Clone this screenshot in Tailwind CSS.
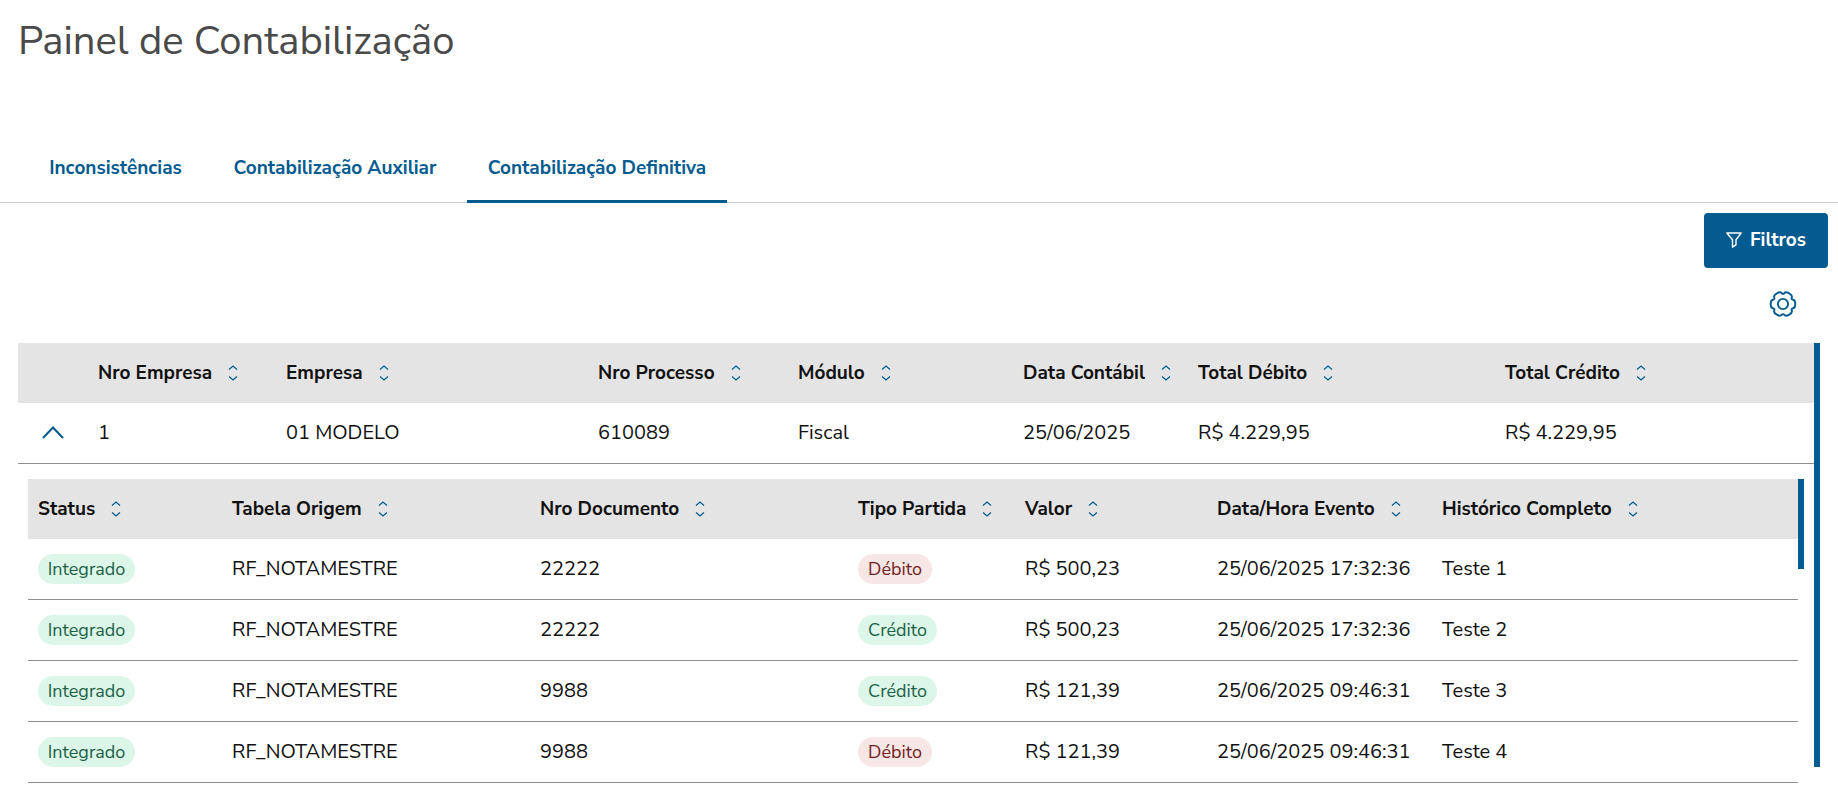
<!DOCTYPE html>
<html lang="pt-BR">
<head>
    <meta charset="UTF-8">
    <meta name="viewport" content="width=device-width, initial-scale=1.0">
    <title>Painel de Contabilização</title>
    <script src="https://cdn.jsdelivr.net/npm/@tailwindcss/browser@4"></script>
</head>
<body class="font-['Nunito_Sans','Nunito','Lato',sans-serif] bg-white text-[#111] text-[20px] leading-7">
    <!-- Shared icons -->
    <svg class="hidden">
        <symbol id="sort" viewBox="0 0 10 16">
            <path d="M1 4.500 5 1l4 3.500M1 11.500 5 15l4-3.500" fill="none" stroke="currentColor" stroke-width="1.200"/>
        </symbol>
    </svg>

    <!-- Title -->
    <header class="px-[18px] pt-2 h-[123px]">
        <h1 class="text-[40px] leading-[66px] font-normal text-[#4a4a4a]">Painel de Contabilização</h1>
    </header>

    <!-- Tabs -->
    <nav class="flex gap-[10px] pl-7 h-20 border-b border-[#ccc] text-[#045b8f] text-[19px] leading-7 font-bold text-center">
        <a href="#" class="w-[175px] pt-[31px]">Inconsistências</a>
        <a href="#" class="w-[244px] pt-[31px]">Contabilização Auxiliar</a>
        <a href="#" class="w-[260px] pt-[31px] -mb-px border-b-3 border-[#045b8f]">Contabilização Definitiva</a>
    </nav>

    <main>
        <!-- Actions -->
        <div class="flex flex-col items-end px-[10px] pt-[10px]">
            <button type="button" class="flex items-center justify-center gap-2 w-[124px] h-[55px] pb-[2px] rounded bg-[#045b8f] text-white text-[19px] leading-7 font-bold">
                <svg class="w-4 h-4" viewBox="0 0 16 16" fill="none" stroke="currentColor" stroke-width="1.400" stroke-linejoin="round">
                    <path d="M.8 1h14.400L10 7.800v5L6.500 15.200V7.800z"/>
                </svg>
                Filtros
            </button>
            <button type="button" aria-label="Configurações" class="mt-[23px] mr-[31px] text-[#045b8f]">
                <svg class="w-[28px] h-[26px] block" viewBox="-14.500 -13.500 29 27" fill="none" stroke="currentColor" stroke-width="2">
                    <path d="M12.740 0Q12.740 4.140 10.530 4.470T9.140 6.890 6.380 11.040 1.400 11.360-1.400 11.360-6.380 11.040-9.140 6.890-10.530 4.470-12.740 0-10.530-4.470-9.140-6.890-6.380-11.040-1.400-11.360 1.400-11.360 6.380-11.040 9.140-6.890 10.530-4.470 12.740 0z"/>
                    <circle r="5.300"/>
                </svg>
            </button>
        </div>

        <!-- Outer grid -->
        <div class="flex items-start ml-[18px] mr-[18px] mt-[26px]">
            <div class="flex-1 min-w-0">
                <table class="w-full table-fixed text-left">
                    <colgroup>
                        <col class="w-[70px]"><col class="w-[188px]"><col class="w-[312px]"><col class="w-[200px]"><col class="w-[225px]"><col class="w-[175px]"><col class="w-[307px]"><col>
                    </colgroup>
                    <thead class="bg-[#e4e4e4] text-[19px] leading-7">
                        <tr class="h-[60px]">
                            <td></td>
                            <th class="px-[10px] font-bold">Nro Empresa<svg class="inline w-[10px] h-4 ml-4 mb-[2px] text-[#045b8f]"><use href="#sort"/></svg></th>
                            <th class="px-[10px] font-bold">Empresa<svg class="inline w-[10px] h-4 ml-4 mb-[2px] text-[#045b8f]"><use href="#sort"/></svg></th>
                            <th class="px-[10px] font-bold">Nro Processo<svg class="inline w-[10px] h-4 ml-4 mb-[2px] text-[#045b8f]"><use href="#sort"/></svg></th>
                            <th class="px-[10px] font-bold">Módulo<svg class="inline w-[10px] h-4 ml-4 mb-[2px] text-[#045b8f]"><use href="#sort"/></svg></th>
                            <th class="px-[10px] font-bold">Data Contábil<svg class="inline w-[10px] h-4 ml-4 mb-[2px] text-[#045b8f]"><use href="#sort"/></svg></th>
                            <th class="px-[10px] font-bold">Total Débito<svg class="inline w-[10px] h-4 ml-4 mb-[2px] text-[#045b8f]"><use href="#sort"/></svg></th>
                            <th class="px-[10px] font-bold">Total Crédito<svg class="inline w-[10px] h-4 ml-4 mb-[2px] text-[#045b8f]"><use href="#sort"/></svg></th>
                        </tr>
                    </thead>
                    <tbody>
                        <tr class="h-[60px] border-b border-[#8f8f8f]">
                            <td class="pl-6">
                                <button type="button" aria-label="Recolher" class="block text-[#045b8f]">
                                    <svg class="w-[22px] h-[14px]" viewBox="0 0 22 14" fill="none" stroke="currentColor" stroke-width="2"><path d="M1 12 11 1.500 21 12"/></svg>
                                </button>
                            </td>
                            <td class="px-[10px]">1</td>
                            <td class="px-[10px]">01 MODELO</td>
                            <td class="px-[10px]">610089</td>
                            <td class="px-[10px]">Fiscal</td>
                            <td class="px-[10px]">25/06/2025</td>
                            <td class="px-[10px]">R$ 4.229,95</td>
                            <td class="px-[10px]">R$ 4.229,95</td>
                        </tr>
                    </tbody>
                </table>

                <!-- Detail grid -->
                <div class="flex items-start pl-[10px] pr-[10px] pt-[15px]">
                    <table class="flex-1 w-full table-fixed text-left">
                        <colgroup>
                            <col class="w-[194px]"><col class="w-[308px]"><col class="w-[318px]"><col class="w-[167px]"><col class="w-[192px]"><col class="w-[225px]"><col>
                        </colgroup>
                        <thead class="bg-[#e4e4e4] text-[19px] leading-7">
                            <tr class="h-[60px]">
                                <th class="px-[10px] font-bold">Status<svg class="inline w-[10px] h-4 ml-4 mb-[2px] text-[#045b8f]"><use href="#sort"/></svg></th>
                                <th class="px-[10px] font-bold">Tabela Origem<svg class="inline w-[10px] h-4 ml-4 mb-[2px] text-[#045b8f]"><use href="#sort"/></svg></th>
                                <th class="px-[10px] font-bold">Nro Documento<svg class="inline w-[10px] h-4 ml-4 mb-[2px] text-[#045b8f]"><use href="#sort"/></svg></th>
                                <th class="px-[10px] font-bold">Tipo Partida<svg class="inline w-[10px] h-4 ml-4 mb-[2px] text-[#045b8f]"><use href="#sort"/></svg></th>
                                <th class="px-[10px] font-bold">Valor<svg class="inline w-[10px] h-4 ml-4 mb-[2px] text-[#045b8f]"><use href="#sort"/></svg></th>
                                <th class="px-[10px] font-bold">Data/Hora Evento<svg class="inline w-[10px] h-4 ml-4 mb-[2px] text-[#045b8f]"><use href="#sort"/></svg></th>
                                <th class="px-[10px] font-bold">Histórico Completo<svg class="inline w-[10px] h-4 ml-4 mb-[2px] text-[#045b8f]"><use href="#sort"/></svg></th>
                            </tr>
                        </thead>
                        <tbody>
                            <tr class="h-[61px] border-b border-[#8f8f8f]">
                                <td class="px-[10px]"><span class="block w-[97px] h-[30px] rounded-full bg-[#dcf6ea] text-[#1c6145] text-[18px] leading-[30px] text-center">Integrado</span></td>
                                <td class="px-[10px]">RF_NOTAMESTRE</td>
                                <td class="px-[10px]">22222</td>
                                <td class="px-[10px]"><span class="block w-[74px] h-[30px] rounded-full bg-[#f6e6e5] text-[#72211d] text-[18px] leading-[30px] text-center">Débito</span></td>
                                <td class="px-[10px]">R$ 500,23</td>
                                <td class="px-[10px]">25/06/2025 17:32:36</td>
                                <td class="px-[10px]">Teste 1</td>
                            </tr>
                            <tr class="h-[61px] border-b border-[#8f8f8f]">
                                <td class="px-[10px]"><span class="block w-[97px] h-[30px] rounded-full bg-[#dcf6ea] text-[#1c6145] text-[18px] leading-[30px] text-center">Integrado</span></td>
                                <td class="px-[10px]">RF_NOTAMESTRE</td>
                                <td class="px-[10px]">22222</td>
                                <td class="px-[10px]"><span class="block w-[79px] h-[30px] rounded-full bg-[#dcf6ea] text-[#1c6145] text-[18px] leading-[30px] text-center">Crédito</span></td>
                                <td class="px-[10px]">R$ 500,23</td>
                                <td class="px-[10px]">25/06/2025 17:32:36</td>
                                <td class="px-[10px]">Teste 2</td>
                            </tr>
                            <tr class="h-[61px] border-b border-[#8f8f8f]">
                                <td class="px-[10px]"><span class="block w-[97px] h-[30px] rounded-full bg-[#dcf6ea] text-[#1c6145] text-[18px] leading-[30px] text-center">Integrado</span></td>
                                <td class="px-[10px]">RF_NOTAMESTRE</td>
                                <td class="px-[10px]">9988</td>
                                <td class="px-[10px]"><span class="block w-[79px] h-[30px] rounded-full bg-[#dcf6ea] text-[#1c6145] text-[18px] leading-[30px] text-center">Crédito</span></td>
                                <td class="px-[10px]">R$ 121,39</td>
                                <td class="px-[10px]">25/06/2025 09:46:31</td>
                                <td class="px-[10px]">Teste 3</td>
                            </tr>
                            <tr class="h-[61px] border-b border-[#8f8f8f]">
                                <td class="px-[10px]"><span class="block w-[97px] h-[30px] rounded-full bg-[#dcf6ea] text-[#1c6145] text-[18px] leading-[30px] text-center">Integrado</span></td>
                                <td class="px-[10px]">RF_NOTAMESTRE</td>
                                <td class="px-[10px]">9988</td>
                                <td class="px-[10px]"><span class="block w-[74px] h-[30px] rounded-full bg-[#f6e6e5] text-[#72211d] text-[18px] leading-[30px] text-center">Débito</span></td>
                                <td class="px-[10px]">R$ 121,39</td>
                                <td class="px-[10px]">25/06/2025 09:46:31</td>
                                <td class="px-[10px]">Teste 4</td>
                            </tr>
                        </tbody>
                    </table>
                    <div class="w-[6px] h-[90px] bg-[#045b8f]"></div>
                </div>
            </div>
            <div class="w-[6px] h-[424px] bg-[#045b8f]"></div>
        </div>
    </main>
</body>
</html>
